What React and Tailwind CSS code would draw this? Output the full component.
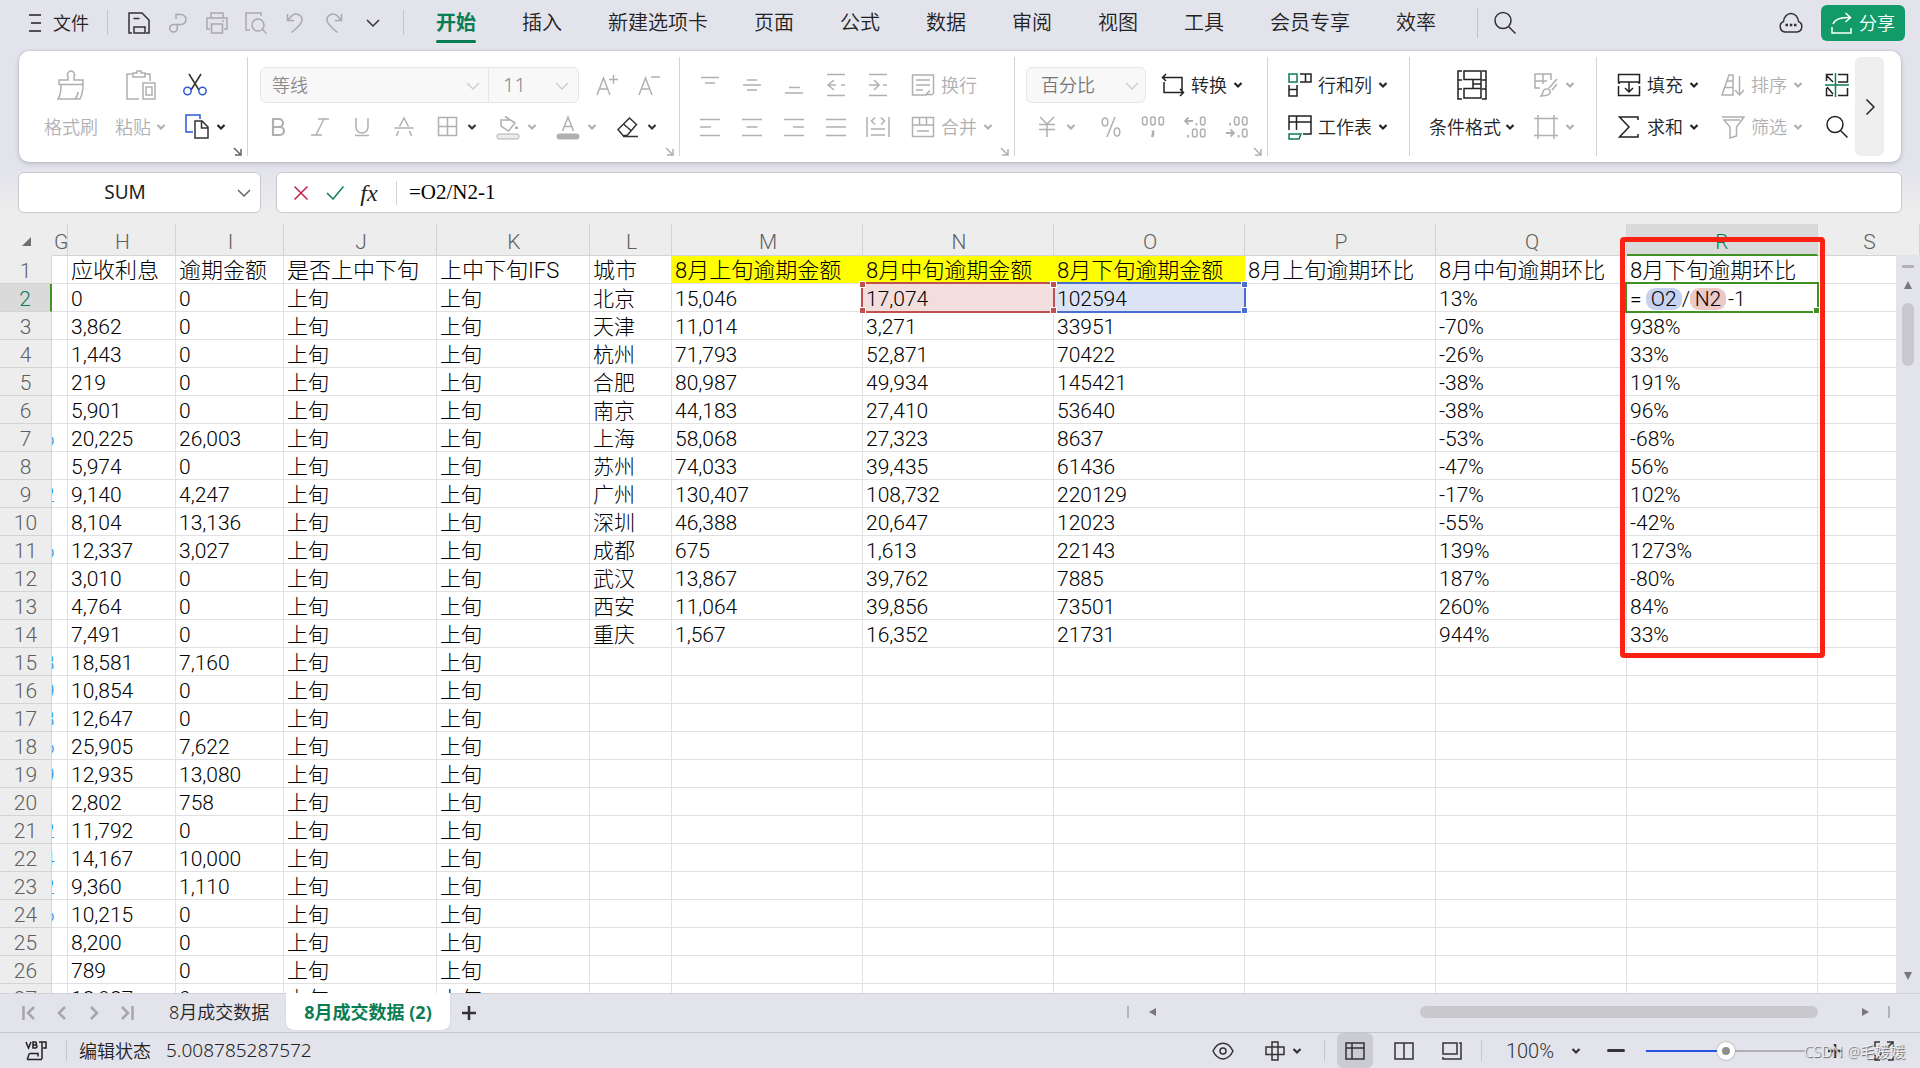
import React from "react";

const COLS = [
  ["G", "w-[16px]"],
  ["H", "w-[108px]"],
  ["I", "w-[108px]"],
  ["J", "w-[153px]"],
  ["K", "w-[153px]"],
  ["L", "w-[82px]"],
  ["M", "w-[191px]"],
  ["N", "w-[191px]"],
  ["O", "w-[191px]"],
  ["P", "w-[191px]"],
  ["Q", "w-[191px]"],
  ["R", "w-[191px]"],
  ["S", ""],
];

const HEADINGS = {
  H: "应收利息", I: "逾期金额", J: "是否上中下旬", K: "上中下旬IFS", L: "城市",
  M: "8月上旬逾期金额", N: "8月中旬逾期金额", O: "8月下旬逾期金额",
  P: "8月上旬逾期环比", Q: "8月中旬逾期环比", R: "8月下旬逾期环比",
};

// Trailing digit of column G, interest, overdue amount
const LOANS = [
  ["", "0", "0"], ["", "3,862", "0"], ["", "1,443", "0"], ["", "219", "0"], ["", "5,901", "0"],
  ["6", "20,225", "26,003"], ["", "5,974", "0"], ["2", "9,140", "4,247"], ["", "8,104", "13,136"],
  ["6", "12,337", "3,027"], ["", "3,010", "0"], ["", "4,764", "0"], ["", "7,491", "0"],
  ["3", "18,581", "7,160"], ["9", "10,854", "0"], ["3", "12,647", "0"], ["6", "25,905", "7,622"],
  ["9", "12,935", "13,080"], ["", "2,802", "758"], ["2", "11,792", "0"], ["4", "14,167", "10,000"],
  ["2", "9,360", "1,110"], ["6", "10,215", "0"], ["", "8,200", "0"], ["", "789", "0"], ["", "18,987", "0"],
];

const CITIES = [
  ["北京", "15,046", "17,074", "102594", "13%", ""],
  ["天津", "11,014", "3,271", "33951", "-70%", "938%"],
  ["杭州", "71,793", "52,871", "70422", "-26%", "33%"],
  ["合肥", "80,987", "49,934", "145421", "-38%", "191%"],
  ["南京", "44,183", "27,410", "53640", "-38%", "96%"],
  ["上海", "58,068", "27,323", "8637", "-53%", "-68%"],
  ["苏州", "74,033", "39,435", "61436", "-47%", "56%"],
  ["广州", "130,407", "108,732", "220129", "-17%", "102%"],
  ["深圳", "46,388", "20,647", "12023", "-55%", "-42%"],
  ["成都", "675", "1,613", "22143", "139%", "1273%"],
  ["武汉", "13,867", "39,762", "7885", "187%", "-80%"],
  ["西安", "11,064", "39,856", "73501", "260%", "84%"],
  ["重庆", "1,567", "16,352", "21731", "944%", "33%"],
];

const ROWS = LOANS.map(([g, h, i], n) => {
  const [l, m, nn, o, q, r] = CITIES[n] || [];
  return { G: g, H: h, I: i, J: "上旬", K: "上旬", L: l, M: m, N: nn, O: o, Q: q, R: r };
});

function Icon({ children, w = 24, h = 24, className = "", sw = 1.5 }) {
  return (
    <svg width={w} height={h} viewBox={`0 0 ${w} ${h}`} fill="none" stroke="currentColor" strokeWidth={sw} className={`shrink-0 ${className}`} aria-hidden="true">
      {children}
    </svg>
  );
}

const Caret = ({ className = "" }) => (
  <Icon w={10} h={10} sw={2.2} className={className}>
    <path d="M1.5 3 5 6.5 8.5 3" />
  </Icon>
);

const Chevron = ({ className = "" }) => (
  <Icon w={14} h={14} className={className}>
    <path d="M1 4l6 6 6-6" />
  </Icon>
);

const Launcher = ({ className = "" }) => (
  <button aria-label="更多设置" className={`absolute right-[5px] bottom-0 ${className}`}>
    <Icon w={9} h={9}>
      <path d="M1 1l7 7M8 2v6H2" />
    </Icon>
  </button>
);

const Group = ({ children, className = "" }) => (
  <div className={`relative my-[6px] flex shrink-0 border-r border-[#d4d4d8] pt-[7px] ${className}`}>{children}</div>
);
const Row = ({ children, className = "" }) => <div className={`flex h-[42px] items-center ${className}`}>{children}</div>;

const Square = ({ label, children }) => (
  <button aria-label={label} className="flex h-9 w-[42px] items-center justify-center">{children}</button>
);
const Split = ({ label, children, caret = "" }) => (
  <button aria-label={label} className="flex h-9 w-[60px] items-center pl-[11px]">
    {children}
    <Caret className={`ml-[7px] ${caret}`} />
  </button>
);
const Labeled = ({ icon, text, caret = true, className = "" }) => (
  <button className={`flex h-9 items-center gap-[6px] whitespace-nowrap ${className}`}>
    {icon}
    <span>{text}</span>
    {caret && <Caret />}
  </button>
);

const IconSearch = () => (
  <Icon><circle cx="10" cy="9.5" r="8" /><path d="M15.5 15.5l7 7" /></Icon>
);

function MenuBar() {
  const tabs = ["插入", "新建选项卡", "页面", "公式", "数据", "审阅", "视图", "工具", "会员专享", "效率"];
  return (
    <header className="flex h-[51px] shrink-0 items-center pr-[15px] pb-[6px] pl-[29px] text-[#222]">
      <button className="flex items-center gap-[12px] text-lg">
        <Icon w={12} h={20} sw={1.5}><path d="M0 2h12M2 10h10M0 18h12" /></Icon>
        文件
      </button>
      <div className="ml-[18px] h-[25px] w-px bg-[#c3c3c8]" />
      <div className="ml-[11px] flex text-[#a9a9ad]">
        <button aria-label="保存" className="flex w-[39px] justify-center text-[#333]">
          <Icon><path d="M5 22H2V2h13l7 7v13h-3M7 22v-6h11v6zM6.500 7.500h6" /></Icon>
        </button>
        <button aria-label="输出" className="flex w-[39px] justify-center">
          <Icon><path d="M10 8V3.500h5a5 5 0 0 1 0 10H7.500a3.800 3.800 0 1 0 3.800 3.800V13.500" /></Icon>
        </button>
        <button aria-label="打印" className="flex w-[39px] justify-center">
          <Icon><path d="M6 7V2h12v5M5 18H2V7h20v11h-3M6.500 13h11v9h-11zM17 10h2" /></Icon>
        </button>
        <button aria-label="打印预览" className="flex w-[39px] justify-center">
          <Icon><path d="M17 5V2H2v17h4" /><circle cx="14" cy="14" r="6" /><path d="M18.500 18.500l4 4" /></Icon>
        </button>
        <button aria-label="撤销" className="flex w-[39px] justify-center">
          <Icon><path d="M4.500 3v6.500h6.500M5 9l3-3.500C13 0 21 5 18.500 11 17 14 13 18 8.500 21.500" /></Icon>
        </button>
        <button aria-label="恢复" className="flex w-[39px] justify-center">
          <Icon><path d="M19.500 3v6.500H13M19 9l-3-3.500C11 0 3 5 5.500 11 7 14 11 18 15.500 21.500" /></Icon>
        </button>
        <button aria-label="更多" className="flex w-[39px] items-center justify-center text-[#333]"><Chevron /></button>
      </div>
      <div className="ml-[11px] h-[25px] w-px bg-[#c3c3c8]" />
      <nav className="ml-[32px] flex items-center gap-[46px] text-xl whitespace-nowrap">
        <button className="relative font-bold text-[#0b7d52]">
          开始
          <span className="absolute inset-x-0 -bottom-[6px] h-[3px] rounded-full bg-[#0b7d52]" />
        </button>
        {tabs.map((t) => <button key={t}>{t}</button>)}
      </nav>
      <div className="ml-[41px] h-[30px] w-px bg-[#c3c3c8]" />
      <button aria-label="搜索" className="ml-[15px] text-[#333]"><IconSearch /></button>
      <button aria-label="云文档" className="ml-auto text-[#333]">
        <Icon w={26}>
          <path d="M7 21a5.500 5.500 0 0 1-1.500-10.500C6 6 9 2.500 13 2.500s7 3.500 7.500 8A5.500 5.500 0 0 1 19 21z" />
          <path d="M7.500 14h2.500M11.800 14h2.500M16 14h2.500" strokeWidth="2.500" />
        </Icon>
      </button>
      <button className="ml-[17px] flex h-[36px] items-center gap-[7px] rounded-md bg-[#129b69] px-[10px] text-lg text-white">
        <Icon w={21} h={22}>
          <path d="M1 15v6h19v-5M2 12C4 7 9 5 19 5.500M14.500 1l5 4.500-5 4.500" />
        </Icon>
        分享
      </button>
    </header>
  );
}

function Ribbon() {
  return (
    <section className="mx-[19px] flex h-[111px] shrink-0 rounded-[10px] bg-white text-lg text-[#222] shadow-[0_0_2px_#a8a8b4,0_2px_5px_#c0c0cc]">
      <Group className="w-[229px] items-start pl-[25px]">
        <button className="w-[54px] whitespace-nowrap text-[#b0b0b3]">
          <span className="flex h-[42px] items-center justify-center">
            <Icon w={28} h={30}>
              <path d="M2 15V10h9V6.500a3.500 3.500 0 1 1 6 0V10h9v5M2 14.500h24M4 15C4 21 3 26 1 29h22c2-4 3-8 3-14M18 29c2-2 3-4 3-7" />
            </Icon>
          </span>
          <span className="flex h-[42px] items-center">格式刷</span>
        </button>
        <button className="ml-[17px] w-[52px] whitespace-nowrap text-[#b0b0b3]">
          <span className="flex h-[42px] items-center justify-center">
            <Icon w={30} h={30}>
              <path d="M6 4H1v25h12M19 4h5v7M7 7V3h4V1h4v2h4v4zM17 13h12v16H17zM20 17h6v8h-6z" />
            </Icon>
          </span>
          <span className="flex h-[42px] items-center gap-[5px]">粘贴<Caret /></span>
        </button>
        <div className="ml-[16px]">
          <Row>
            <button aria-label="剪切">
              <Icon><path d="M6 1l10 16M18 1L8 17" stroke="#333" /><g stroke="#2b5ad8"><circle cx="4.500" cy="18" r="3.700" /><circle cx="19.500" cy="18" r="3.700" /></g></Icon>
            </button>
          </Row>
          <Row>
            <button aria-label="复制" className="flex items-center gap-[7px]">
              <Icon w={26} h={26}>
                <path d="M10 18H3V1h14v4" stroke="#2b5ad8" />
                <path d="M12 7h7l6 6v11H12zM18.500 7.500V14H25" stroke="#333" />
              </Icon>
              <Caret />
            </button>
          </Row>
        </div>
        <Launcher className="text-[#666]" />
      </Group>

      <Group className="w-[432px] flex-col pl-[9px] text-[#b0b0b3]">
        <Row>
          <div className="relative ml-[3px] flex h-[36px] w-[319px] rounded-md border border-[#e6e6e8] bg-[#f8f8f8] text-[#8b8b8f]">
            <select aria-label="字体" className="w-[228px] appearance-none border-r border-[#e6e6e8] pl-[11px] outline-none"><option>等线</option></select>
            <select aria-label="字号" className="flex-1 appearance-none pl-[14px] text-xl outline-none"><option>11</option></select>
            <Chevron className="pointer-events-none absolute top-[11px] left-[205px] text-[#cfcfd2]" />
            <Chevron className="pointer-events-none absolute top-[11px] right-[9px] text-[#cfcfd2]" />
          </div>
          <div className="ml-[7px] flex">
            <Square label="增大字号"><Icon><path d="M2 22L8.500 5l6.500 17M4.500 16h8M14 6.500h9M18.500 2v9" /></Icon></Square>
            <Square label="减小字号"><Icon><path d="M2 22L8.500 5l6.500 17M4.500 16h8M14 4h9" /></Icon></Square>
          </div>
        </Row>
        <Row>
          <Square label="加粗"><Icon sw={2.2}><path d="M7 4h6a4 4 0 0 1 0 8H7zM7 12h7a4 4 0 0 1 0 8H7z" /></Icon></Square>
          <Square label="倾斜"><Icon><path d="M10 4h11M3 20h11M16 4L8 20" /></Icon></Square>
          <Square label="下划线"><Icon><path d="M6 3v9a6 6 0 0 0 12 0V3M5 20.500h14" /></Icon></Square>
          <Square label="删除线"><Icon><path d="M7.500 11.500L12 3l4.500 8.500M2.500 13h19M6.500 16L4.500 21M17.500 16l2 5" /></Icon></Square>
          <Split label="边框" caret="text-[#333]"><Icon><path d="M2.500 2.500h18v18h-18zM11.500 2.500v18M2.500 11.500h18" /></Icon></Split>
          <Split label="填充颜色">
            <Icon w={24} h={26}>
              <path d="M9 2.500L19 9l-6.500 8L5 12V6h9" /><path d="M20.500 12.500v2.500" strokeWidth="3" />
              <rect x="1" y="20" width="22" height="5" rx="2" fill="#ececec" strokeWidth="1" />
            </Icon>
          </Split>
          <Split label="字体颜色">
            <Icon w={24} h={26}>
              <path d="M6.500 17L12 3l5.500 14M8.500 12.500h7" />
              <rect x="1" y="20" width="22" height="5" rx="2" fill="#b0b0b3" strokeWidth="1" />
            </Icon>
          </Split>
          <Split label="清除" caret="text-[#333]">
            <Icon className="text-[#333]"><path d="M13.500 3l7 6.500-9.500 11H7L2 14.500zM7.500 9l8 7M7 21.500h15" /></Icon>
          </Split>
        </Row>
        <Launcher />
      </Group>

      <Group className="w-[335px] flex-col pl-[9px] text-[#b0b0b3]">
        <Row>
          <Square label="顶端对齐"><Icon><path d="M3 4.500h18M7 10h10" /></Icon></Square>
          <Square label="垂直居中"><Icon><path d="M7 7h10M3 12h18M7 17h10" /></Icon></Square>
          <Square label="底端对齐"><Icon><path d="M7 14.500h11M3 20h18" /></Icon></Square>
          <Square label="减少缩进"><Icon><path d="M3 1.500h18M3 22.500h18M10 7l-6 5 6 5M4 12h8M17 12h4" /></Icon></Square>
          <Square label="增加缩进"><Icon><path d="M3 1.500h18M3 22.500h18M8 7l5 5-5 5M3 12h10M17 12h4" /></Icon></Square>
          <Labeled text="换行" caret={false} className="ml-[12px]" icon={<Icon><path d="M16 22H1.500V2h21v19M5 7h14M5 12h14M5 17h7M22 21.500h-7l4-4" /></Icon>} />
        </Row>
        <Row>
          <Square label="左对齐"><Icon><path d="M2 4.500h20M2 12h11M2 20.500h20" /></Icon></Square>
          <Square label="居中"><Icon><path d="M2 4.500h20M6.500 12h11M2 20.500h20" /></Icon></Square>
          <Square label="右对齐"><Icon><path d="M2 4.500h20M11 12h11M2 20.500h20" /></Icon></Square>
          <Square label="两端对齐"><Icon><path d="M2 4.500h20M2 12h20M2 20.500h20" /></Icon></Square>
          <Square label="分散对齐"><Icon><path d="M1 2v20M23 2v20M5 14h14M5 20h14M9 2.500L5.500 6 9 9.500M15 2.500L18.500 6 15 9.500" /></Icon></Square>
          <Labeled text="合并" className="ml-[12px]" icon={<Icon><path d="M1.500 2.500h21v19h-21zM1.500 10h21M8.500 2.500V10M15.500 2.500V10M6 16h12" /></Icon>} />
        </Row>
        <Launcher />
      </Group>

      <Group className="w-[253px] flex-col pl-[9px] text-[#b0b0b3]">
        <Row>
          <div className="relative ml-[2px] flex h-[36px] w-[120px] rounded-md border border-[#e6e6e8] bg-[#f8f8f8] text-[#77777b]">
            <select aria-label="数字格式" className="w-full appearance-none pl-[14px] outline-none"><option>百分比</option></select>
            <Chevron className="pointer-events-none absolute top-[11px] right-[6px] text-[#cfcfd2]" />
          </div>
          <Labeled text="转换" className="ml-[15px] text-[#222]" icon={<Icon><path d="M5 1L1.500 4.500 5 8M2 4.500h19V18M19 23l3.500-3.500L19 16M22 19.500H3V9" /></Icon>} />
        </Row>
        <Row>
          <Split label="货币"><Icon><path d="M5 2l7 7 7-7M4 9.500h16M4 14.500h16M12 9v13" /></Icon></Split>
          <div className="ml-[6px] flex">
            <Square label="百分比样式"><Icon><path d="M16 2L8 22" /><ellipse cx="6" cy="7" rx="2.800" ry="4" /><ellipse cx="18" cy="17" rx="2.800" ry="4" /></Icon></Square>
            <Square label="千位分隔">
              <Icon><rect x="1.500" y="2" width="4.500" height="8" rx="2.200" /><rect x="9.700" y="2" width="4.500" height="8" rx="2.200" /><rect x="18" y="2" width="4.500" height="8" rx="2.200" /><path d="M12 15.500v3M12.500 18l-1.500 4" strokeWidth="2.500" /></Icon>
            </Square>
            <Square label="增加小数位">
              <Icon><path d="M5.500 2.500L2 6l3.500 3.500M2 6h8M13.500 8v2.500M5 20v2.500" strokeWidth="1.800" /><rect x="17.500" y="2" width="4.500" height="8" rx="2.200" /><rect x="9.500" y="14" width="4.500" height="8" rx="2.200" /><rect x="17.500" y="14" width="4.500" height="8" rx="2.200" /></Icon>
            </Square>
            <Square label="减少小数位">
              <Icon><path d="M5.500 14.500L9 18l-3.500 3.500M1 18h8M5 8v2.500M13.500 20v2.500" strokeWidth="1.800" /><rect x="9.500" y="2" width="4.500" height="8" rx="2.200" /><rect x="17.500" y="2" width="4.500" height="8" rx="2.200" /><rect x="17.500" y="14" width="4.500" height="8" rx="2.200" /></Icon>
            </Square>
          </div>
        </Row>
        <Launcher />
      </Group>

      <Group className="w-[142px] flex-col pl-[20px]">
        <Row>
          <Labeled text="行和列" icon={<Icon h={26}><path d="M1 2h8v8H1z" stroke="#0b7d52" /><path d="M12 2h11v8H12M17.500 2v8M1 13v11h8V13M1 17.500h8" /></Icon>} />
        </Row>
        <Row>
          <Labeled text="工作表" icon={<Icon h={26}><path d="M1 16V2h22v18h-8M1 8h22M8.500 2v14" /><path d="M1 20h12l-2 5H1z" stroke="#0b7d52" /></Icon>} />
        </Row>
      </Group>

      <Group className="w-[187px] items-start pl-[19px]">
        <button className="w-[86px] whitespace-nowrap">
          <span className="flex h-[42px] items-center justify-center">
            <Icon w={30} h={30}><path d="M5 1H1v28h4M25 1h4v28h-4M7 1h17v8.500H7zM7 9.500h9v9H7M16 14h8M24 9.500v9M7 18.500h17V28H7zM1 10h4M1 19h4M25 10h4M25 19h4" /></Icon>
          </span>
          <span className="flex h-[42px] items-center gap-[4px]">条件格式<Caret /></span>
        </button>
        <div className="ml-[19px] text-[#b0b0b3]">
          <Row>
            <button aria-label="表格样式" className="flex items-center gap-[7px]">
              <Icon h={26}><path d="M6 16H1V2h16v6M1 9h12M9 2v10M23 7L15 16M23 12l-5 6M7 24c1-1 2-2 2-4 1-4 6-4 7-1s-2 5-9 5z" /></Icon>
              <Caret />
            </button>
          </Row>
          <Row>
            <button aria-label="单元格" className="flex items-center gap-[7px]">
              <Icon><path d="M0 3.500h24M0 20.500h24M4 0v24M20 0v24" /></Icon>
              <Caret />
            </button>
          </Row>
        </div>
      </Group>

      <div className="my-[6px] flex flex-col pt-[7px] pl-[20px]">
        <Row className="gap-[22px]">
          <Labeled text="填充" icon={<Icon><path d="M3 10H1.500V1.500h21V10H21M1.500 13v9.500h21V13M1.500 9h21M12 9v10M8 15l4 4 4-4" /></Icon>} />
          <Labeled text="排序" className="text-[#b0b0b3]" icon={<Icon><path d="M12 22V2H8L1 22zM6 8h6M4 14.500h8M18.500 3v19M14 17l4.500 5 4.500-5" /></Icon>} />
          <button aria-label="冻结窗格"><Icon><path d="M8 1.500H1.500V8M13 1.500h9.500V9H13M1.500 15v7.500H8M13 22.500h9.500V15M2 3l6 6M2 14l6 7" /><path d="M0 12h24M10.500 0v24" stroke="#0b7d52" /></Icon></button>
        </Row>
        <Row className="gap-[22px]">
          <Labeled text="求和" icon={<Icon><path d="M21 5V2H2.500l9.500 10-9.500 10H21v-3" /></Icon>} />
          <Labeled text="筛选" className="text-[#b0b0b3]" icon={<Icon><path d="M1 2h22l-7.500 10v9L9 23V12L3 5h16" /></Icon>} />
          <button aria-label="查找"><IconSearch /></button>
        </Row>
      </div>
      <button aria-label="展开" className="my-[6px] mr-[17px] ml-auto flex w-[29px] items-center justify-center rounded-md bg-[#eeeeef]">
        <Icon w={10} h={18}><path d="M1.500 1.500L9 9l-7.500 7.500" /></Icon>
      </button>
    </section>
  );
}

function FormulaBar() {
  return (
    <section className="mx-[18px] mt-[10px] mb-[11px] flex h-[41px] shrink-0 gap-[15px]">
      <div className="flex w-[243px] items-center rounded-md border border-[#c8c8d0] bg-white">
        <input aria-label="名称框" defaultValue="SUM" className="w-[212px] bg-transparent text-center text-[19px] font-normal text-[#222] outline-none" />
        <button aria-label="名称列表" className="text-[#666]"><Chevron className="ml-[6px]" /></button>
      </div>
      <div className="flex flex-1 items-center rounded-md border border-[#c8c8d0] bg-white pl-[17px]">
        <button aria-label="取消" className="text-[#c4214a]"><Icon w={14} h={14}><path d="M.5.500l13 13M13.500.500l-13 13" /></Icon></button>
        <button aria-label="输入" className="ml-[18px] text-[#0b7d52]"><Icon w={18} h={14}><path d="M1 7l6 6L17.500.500" /></Icon></button>
        <button aria-label="插入函数" className="ml-[13px] w-[24px] font-['Liberation_Serif',serif] text-2xl leading-6 text-[#222] italic">fx</button>
        <div className="ml-[15px] h-[24px] w-px bg-[#d4d4d8]" />
        <input aria-label="编辑栏" defaultValue="=O2/N2-1" className="ml-[12px] flex-1 bg-transparent font-['Liberation_Serif','Noto_Sans_CJK_SC',serif] text-[21px] font-normal text-black outline-none" />
      </div>
    </section>
  );
}

const Handle = ({ className }) => <span className={`absolute size-[7px] border border-white ${className}`} />;

function Marker({ border, handle }) {
  return (
    <span className={`absolute -top-[2px] -right-[2px] -bottom-[2px] -left-[2px] border-2 ${border}`}>
      <Handle className={`-top-[3px] -left-[4px] ${handle}`} />
      <Handle className={`-top-[3px] -right-[4px] ${handle}`} />
      <Handle className={`-bottom-[3px] -left-[4px] ${handle}`} />
      <Handle className={`-right-[4px] -bottom-[3px] ${handle}`} />
    </span>
  );
}

function Cell({ col, row, value }) {
  const base = "relative border-r border-b border-[#e1e1e1] p-0 pt-[3px] pl-[3px] text-left whitespace-nowrap";
  if (col === "G") {
    return (
      <td className={base}>
        <span className="absolute inset-0 overflow-hidden pt-[3px] text-[#1e9be6]"><span className="-ml-[9px]">{value}</span></span>
      </td>
    );
  }
  if (row === 2 && col === "N") {
    return <td className={`${base} z-[2] bg-[#f3dede]`}>{value}<Marker border="border-[#c0504d]" handle="bg-[#c0504d]" /></td>;
  }
  if (row === 2 && col === "O") {
    return <td className={`${base} z-[1] bg-[#dce3f5]`}>{value}<Marker border="border-[#4a6fce]" handle="bg-[#4a6fce]" /></td>;
  }
  if (row === 2 && col === "R") {
    return (
      <td className={base}>
        <span className="flex h-[24px] items-center">
          =
          <span className="ml-[4px] flex h-[22px] w-[36px] items-center justify-center rounded-[9px] bg-[#c6d2f0]">O2</span>
          /
          <span className="flex h-[22px] w-[36px] items-center justify-center rounded-[9px] bg-[#ecc8c7]">N2</span>
          <span className="ml-[2px]">-1</span>
        </span>
        <span className="absolute -top-[2px] -right-[2px] -bottom-[2px] -left-[2px] z-10 border-2 border-[#3f9122]">
          <Handle className="-right-[3px] -bottom-[3px] bg-[#3f9122]" />
        </span>
      </td>
    );
  }
  return <td className={base}>{value}</td>;
}

function Sheet() {
  return (
    <main className="relative min-h-0 flex-1 overflow-hidden">
      <table className="w-full table-fixed border-separate border-spacing-0 bg-white font-['Roboto','Noto_Sans_CJK_SC',sans-serif] text-[21px] leading-[24px] font-light text-black">
        <colgroup>
          <col className="w-[52px]" />
          {COLS.map(([c, w]) => <col key={c} className={w} />)}
        </colgroup>
        <thead>
          <tr className="h-[32px] bg-[#ededed] text-[#5f5f5f]">
            <th aria-label="全选" className="p-0">
              <Icon w={9} h={9} className="mt-[2px] ml-[22px]"><path d="M9 0v9H0z" fill="#707070" stroke="none" /></Icon>
            </th>
            {COLS.map(([c]) => (
              <th key={c} className={c === "R" ? "relative border-r border-b-2 border-[#3f9122] border-r-[#d4d4d4] bg-[#dadada] p-0 pt-[5px] font-light text-[#0b7d52]" : "border-r border-b border-[#d4d4d4] p-0 pt-[5px] pl-[2px] font-light"}>
                {c}
                {c === "R" && <span className="absolute top-[13px] -right-[8px] -left-[7px] z-20 h-[421px] rounded-[4px] border-[5px] border-[#fc2112]" />}
              </th>
            ))}
          </tr>
        </thead>
        <tbody>
          <tr className="h-[28px] text-[22px]">
            <th className="border-r border-b border-[#d4d4d4] bg-[#ededed] p-0 pt-[3px] text-[21px] font-light text-[#5f5f5f]">1</th>
            {COLS.map(([c]) => (
              <td key={c} className={["M", "N", "O"].includes(c) ? "border-b border-[#e1e1e1] bg-[#ffff00] p-0 pt-[3px] pl-[3px] whitespace-nowrap" : "border-r border-b border-[#e1e1e1] p-0 pt-[3px] pl-[3px] whitespace-nowrap"}>{HEADINGS[c]}</td>
            ))}
          </tr>
          {ROWS.map((r, i) => (
            <tr key={i} className="h-[28px]">
              <th className={i === 0 ? "border-r-2 border-b border-[#d4d4d4] border-r-[#3f9122] bg-[#dadada] p-0 pt-[3px] font-light text-[#0b7d52]" : "border-r border-b border-[#d4d4d4] bg-[#ededed] p-0 pt-[3px] font-light text-[#5f5f5f]"}>{i + 2}</th>
              {COLS.map(([c]) => <Cell key={c} col={c} row={i + 2} value={r[c]} />)}
            </tr>
          ))}
        </tbody>
      </table>
      <div className="absolute top-[31px] right-0 bottom-0 z-10 flex w-[24px] flex-col items-center bg-[#e2e3eb] text-[#77777b]">
        <div className="mt-[10px] h-[3px] w-[12px] bg-[#b4b4b8]" />
        <Icon w={8} h={8} className="mt-[13px]"><path d="M4 0l4 8H0z" fill="currentColor" stroke="none" /></Icon>
        <div className="mt-[14px] h-[63px] w-[12px] rounded-full bg-[#c9c9cd]" />
        <Icon w={8} h={8} className="mt-auto mb-[13px]"><path d="M4 8L0 0h8z" fill="currentColor" stroke="none" /></Icon>
      </div>
    </main>
  );
}

function SheetTabs() {
  return (
    <div className="flex h-[39px] shrink-0 border-t border-[#d2d2d8] text-lg text-[#222]">
      <div className="flex items-center gap-[21px] pl-[22px] text-[#a5a5aa]">
        <button aria-label="首个工作表"><Icon w={14} h={16} sw={2.5}><path d="M1.500 1v14M12 2L6 8l6 6" /></Icon></button>
        <button aria-label="上一个"><Icon w={9} h={16} sw={2.5}><path d="M8 2L2 8l6 6" /></Icon></button>
        <button aria-label="下一个" className="ml-[3px]"><Icon w={9} h={16} sw={2.5}><path d="M1 2l6 6-6 6" /></Icon></button>
        <button aria-label="末个工作表"><Icon w={14} h={16} sw={2.5}><path d="M12.500 1v14M2 2l6 6-6 6" /></Icon></button>
      </div>
      <button className="ml-[35px] pb-[2px]">8月成交数据</button>
      <button className="-mt-px mb-[2px] ml-[17px] rounded-b-lg bg-white px-[18px] font-bold text-[#0b7d52] shadow-[0_0_1px_#aaa]">8月成交数据 (2)</button>
      <button aria-label="新建工作表" className="ml-[11px] text-[#333]"><Icon w={16} h={16} sw={2.5}><path d="M8 1v14M1 8h14" /></Icon></button>
      <div className="mr-[30px] ml-auto flex w-[763px] items-center pb-[2px] text-[#77777b]">
        <div className="h-[12px] w-[2px] bg-[#b4b4b8]" />
        <Icon w={7} h={8} className="ml-[20px]"><path d="M0 4l7-4v8z" fill="currentColor" stroke="none" /></Icon>
        <div className="mr-[44px] ml-auto h-[12px] w-[398px] rounded-full bg-[#c9c9cd]" />
        <Icon w={7} h={8}><path d="M7 4L0 0v8z" fill="currentColor" stroke="none" /></Icon>
        <div className="ml-[19px] h-[12px] w-[2px] bg-[#b4b4b8]" />
      </div>
    </div>
  );
}

function StatusBar() {
  return (
    <footer className="relative flex h-[36px] shrink-0 items-center border-t border-[#c6c6cb] pl-[25px] text-lg whitespace-nowrap text-[#222]">
      <button aria-label="宏">
        <Icon w={22} h={20}>
          <path d="M1 1l2.500 6L6 1M8 1v6h2.500a1.500 1.500 0 0 0 0-3H8h2a1.500 1.500 0 0 0 0-3zM14 1h7v6h-3M17 1v17M2 18.500h15M2 18.500c2-2 1-6 3-6h8v3" />
        </Icon>
      </button>
      <div className="ml-[19px] h-[21px] w-px bg-[#c6c6cb]" />
      <span className="ml-[12px]">编辑状态</span>
      <span className="ml-[15px] text-[19px]">5.008785287572</span>
      <div className="ml-auto flex h-full items-center text-[#333]">
        <button aria-label="护眼模式"><Icon w={22} h={18}><path d="M1 9c5-10.500 15-10.500 20 0-5 10.500-15 10.500-20 0z" /><circle cx="11" cy="9" r="3" /></Icon></button>
        <button aria-label="阅读模式" className="ml-[31px] flex items-center gap-[7px]">
          <Icon w={20} h={20}><path d="M7 1h6v18H7zM1 6h18v7.500H1z" /></Icon>
          <Caret />
        </button>
        <div className="ml-[22px] h-[21px] w-px bg-[#c6c6cb]" />
        <button aria-label="普通视图" className="ml-[12px] flex h-full w-[36px] items-center justify-center rounded-md bg-[#cbcbd3]">
          <Icon w={20} h={18}><path d="M1 1h18v16H1zM1 6h18M7 1v16" /></Icon>
        </button>
        <button aria-label="分页预览" className="ml-[21px]"><Icon w={20} h={18}><path d="M1 1h18v16H1zM10 1v16" /></Icon></button>
        <button aria-label="页面布局" className="ml-[28px]"><Icon w={20} h={18}><path d="M1 1h14v11H1zM17 1h2v16H1v-2" /></Icon></button>
        <div className="ml-[19px] h-[21px] w-px bg-[#c6c6cb]" />
        <button className="ml-[24px] flex items-center gap-[17px] text-xl">
          <span className="font-['Roboto',sans-serif] font-light">100%</span>
          <Caret />
        </button>
        <button aria-label="缩小" className="ml-[26px] h-[3px] w-[18px] rounded-full bg-[#333]" />
        <input
          type="range"
          aria-label="缩放"
          defaultValue="50"
          className="ml-[21px] h-[2px] w-[160px] appearance-none bg-linear-to-r from-[#2454e0] from-50% to-[#b0b0b5] to-50% [&::-webkit-slider-thumb]:size-[18px] [&::-webkit-slider-thumb]:appearance-none [&::-webkit-slider-thumb]:rounded-full [&::-webkit-slider-thumb]:border-[5px] [&::-webkit-slider-thumb]:border-white [&::-webkit-slider-thumb]:bg-[#8f8f8f] [&::-webkit-slider-thumb]:shadow-[0_0_2px_#888]"
        />
        <button aria-label="放大" className="ml-[21px]"><Icon w={16} h={16} sw={2.5}><path d="M8 1v14M1 8h14" /></Icon></button>
        <button aria-label="全屏" className="mr-[26px] ml-[31px]"><Icon w={20} h={20}><path d="M1 6V1h5M1 14v5h5M19 14v5h-5M13 1h6v6M19 1l-7 7M1 19l7-7" /></Icon></button>
      </div>
      <span className="absolute right-[15px] bottom-[7px] text-[15px] leading-[20px] text-[#f0f0f2] [text-shadow:1px_1px_1px_#555]">CSDN @毛媛媛</span>
    </footer>
  );
}

export default function App() {
  return (
    <div className="flex h-screen flex-col overflow-hidden bg-[#e2e3eb] bg-[linear-gradient(to_bottom,transparent_165px,#ededed_215px,#ededed_260px,transparent_261px)] font-['Noto_Sans','Noto_Sans_CJK_SC',sans-serif] font-[350]">
      <MenuBar />
      <Ribbon />
      <FormulaBar />
      <Sheet />
      <SheetTabs />
      <StatusBar />
    </div>
  );
}
